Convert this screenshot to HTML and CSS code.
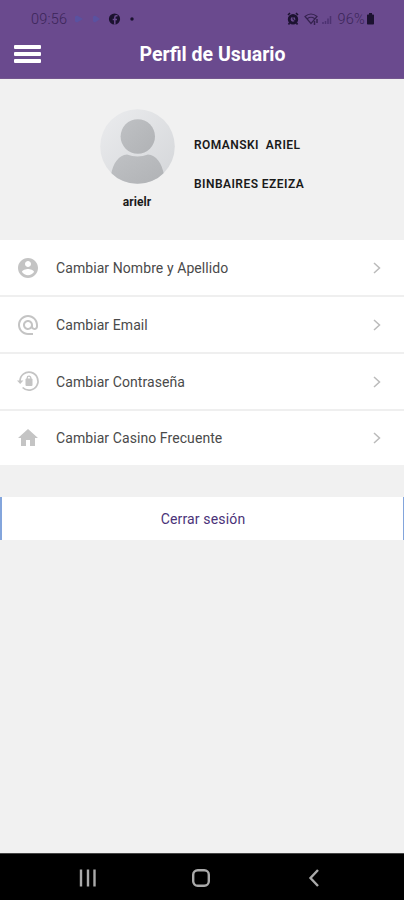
FILE: index.html
```html
<!DOCTYPE html>
<html lang="es">
<head>
  <meta charset="UTF-8" />
  <meta name="viewport" content="width=device-width, initial-scale=1" />
  <title>Perfil de Usuario</title>
  <link rel="stylesheet" href="styles.css">
</head>
<body>
  <header class="header">
    <div class="status-bar">
      <span class="clock">09:56</span>
      <svg class="notifications" width="64" height="14" viewBox="0 0 64 14">
        <path d="M1 4.5l2-1 6 3.500-6 3.500-2-1zM19 4.500l2-1 5 3.500-5 3.500-2-1z" fill="#5a52a0" />
        <circle cx="40.500" cy="7" r="5.600" fill="#1c1230" />
        <path d="M43.500 3.800h-1.200q-1.500 0-1.500 1.600v7M38.700 7.500H43" fill="none" stroke="#6a4a8e" stroke-width="1.500" />
        <circle cx="58" cy="7" r="1.700" fill="#1c1230" />
      </svg>
      <div class="status-right">
        <svg width="48" height="14" viewBox="0 0 48 14">
          <circle cx="6" cy="7.300" r="3.800" fill="none" stroke="#1c1230" stroke-width="2.800" />
          <path d="M1 3l2-2M11 3L9 1M2.500 11l-1 1.500M9.500 11l1 1.500" stroke="#1c1230" stroke-width="1.600" />
          <path d="M6 4.500v3L8 8.500" fill="none" stroke="#1c1230" stroke-width="1" />
          <path d="M18 4.500q6-5 12 0L24 11.500zM20.500 6.500q3.500-2.500 7 0" fill="none" stroke="#35224f" stroke-width="1.200" />
          <path d="M27.500 9v4M30 7v4" stroke="#35224f" stroke-width="1.500" />
          <path d="M36 12v-2M38.500 12V9M41 12V6.500M43.500 12V4" stroke="#4c3270" stroke-width="1.500" />
        </svg>
        <span class="percent">96%</span>
        <svg width="9" height="14" viewBox="0 0 9 14">
          <path d="M3 1h3v1.500h1.200q.8 0 .8.800v8.400q0 .8-.8.800H1.800q-.8 0-.8-.8V3.300q0-.8.8-.8H3z" fill="#1c1230" />
        </svg>
      </div>
    </div>
    <div class="title-bar">
      <div class="menu-btn">
        <span></span>
        <span></span>
        <span></span>
      </div>
      <h1>Perfil de Usuario</h1>
    </div>
  </header>

  <main>
    <section class="profile">
      <div class="profile-user">
        <svg class="avatar" width="76" height="76" viewBox="0 0 76 76">
          <defs>
            <linearGradient id="bg" x1="0" y1="0" x2="1" y2="1">
              <stop offset="0" stop-color="#ebecee" />
              <stop offset="1" stop-color="#d4d6d9" />
            </linearGradient>
            <linearGradient id="person" x1="0" y1="0" x2="1" y2="1">
              <stop offset="0" stop-color="#bfc1c4" />
              <stop offset="1" stop-color="#b0b2b5" />
            </linearGradient>
            <clipPath id="round">
              <circle cx="38.500" cy="37.500" r="37.300" />
            </clipPath>
          </defs>
          <circle cx="38.500" cy="37.500" r="37.300" fill="url(#bg)" />
          <g clip-path="url(#round)" fill="url(#person)">
            <circle cx="38.800" cy="27.500" r="17.200" />
            <path d="M12 66C14 54 20 46 28 45.500q10.500 4 21 0C57 46 63 54 65 66V76H12z" />
          </g>
        </svg>
        <span class="username">arielr</span>
      </div>
      <div class="profile-info">
        <p class="fullname">ROMANSKI&nbsp; ARIEL</p>
        <p class="casino">BINBAIRES EZEIZA</p>
      </div>
    </section>

    <ul class="options">
      <li>
        <svg class="icon" viewBox="0 0 24 24">
          <path fill="#c4c4c4" d="M12 2C6.480 2 2 6.480 2 12s4.480 10 10 10 10-4.480 10-10S17.520 2 12 2zm0 3c1.660 0 3 1.340 3 3s-1.340 3-3 3-3-1.340-3-3 1.340-3 3-3zm0 14.200c-2.500 0-4.710-1.280-6-3.220.03-1.990 4-3.080 6-3.080 1.990 0 5.970 1.090 6 3.080-1.290 1.940-3.500 3.220-6 3.220z" />
        </svg>
        <span class="label">Cambiar Nombre y Apellido</span>
        <svg class="arrow" viewBox="0 0 8 12"><path d="M1 1l5.500 5L1 11" /></svg>
      </li>
      <li>
        <svg class="icon" viewBox="0 0 24 24">
          <path fill="#c4c4c4" d="M12 1.950c-5.520 0-10 4.480-10 10s4.480 10 10 10h5v-2h-5c-4.340 0-8-3.660-8-8s3.660-8 8-8 8 3.660 8 8v1.430c0 .79-.71 1.570-1.500 1.570s-1.500-.78-1.500-1.570v-1.430c0-2.760-2.240-5-5-5s-5 2.240-5 5 2.240 5 5 5c1.380 0 2.640-.56 3.540-1.470.65.89 1.770 1.470 2.960 1.470 1.970 0 3.500-1.600 3.500-3.570v-1.430c0-5.520-4.480-10-10-10zm0 13c-1.660 0-3-1.340-3-3s1.340-3 3-3 3 1.340 3 3-1.340 3-3 3z" />
        </svg>
        <span class="label">Cambiar Email</span>
        <svg class="arrow" viewBox="0 0 8 12"><path d="M1 1l5.500 5L1 11" /></svg>
      </li>
      <li>
        <svg class="icon" viewBox="0 0 24 24">
          <path d="M4 11.500a9 9 0 1 1 2.600 6" fill="none" stroke="#c4c4c4" stroke-width="1.700" />
          <path d="M1 10.500h6.400L4.200 14z" fill="#c4c4c4" />
          <path d="M11.200 9V8a1.800 1.800 0 0 1 3.600 0v1" fill="none" stroke="#c4c4c4" stroke-width="1.300" />
          <rect x="9.500" y="8.500" width="7" height="7.500" rx="1" fill="#c4c4c4" />
        </svg>
        <span class="label">Cambiar Contraseña</span>
        <svg class="arrow" viewBox="0 0 8 12"><path d="M1 1l5.500 5L1 11" /></svg>
      </li>
      <li>
        <svg class="icon" viewBox="0 0 24 24">
          <path fill="#c4c4c4" d="M10 20v-6h4v6h5v-8h3L12 3 2 12h3v8z" />
        </svg>
        <span class="label">Cambiar Casino Frecuente</span>
        <svg class="arrow" viewBox="0 0 8 12"><path d="M1 1l5.500 5L1 11" /></svg>
      </li>
    </ul>

    <button class="logout-btn">Cerrar sesión</button>
  </main>

  <nav class="nav-bar">
    <svg width="18" height="18" viewBox="0 0 18 18">
      <path d="M2 .5v17M9 .5v17M15.500 .5v17" />
    </svg>
    <svg width="18" height="18" viewBox="0 0 18 18">
      <rect x="1.200" y="1.200" width="15.600" height="15.600" rx="4.500" />
    </svg>
    <svg width="18" height="18" viewBox="0 0 18 18">
      <path d="M13 1L5.500 9l7.500 8" />
    </svg>
  </nav>
</body>
</html>
```
FILE: styles.css
```css
* {
  box-sizing: border-box;
}
body {
  font-family: Roboto, sans-serif;
  background: #f1f1f1;
  color: #1a1a1a;
  margin: 0;
  height: 900px;
  display: flex;
  flex-direction: column;
}
.header {
  height: 79px;
  background: #6a4a8e;
  border-bottom: 1px solid #74568f;
}
.status-bar {
  height: 38px;
  padding: 0 29px 0 31px;
  display: flex;
  align-items: center;
  color: #3a2558;
  font-size: 14.500px;
  font-weight: 300;
}
.clock {
  width: 37px;
  white-space: nowrap;
  letter-spacing: 0.200px;
}
.notifications {
  margin-left: 6px;
}
.status-right {
  margin-left: auto;
  display: flex;
  align-items: center;
}
.percent {
  margin: 0 1px 0 3px;
  letter-spacing: 0.200px;
}
.title-bar {
  height: 32px;
  padding: 0 15px 0 14px;
  display: flex;
  align-items: center;
}
.menu-btn {
  width: 27px;
  display: flex;
  flex-direction: column;
  gap: 3px;
}
.menu-btn span {
  height: 4px;
  background: #fff;
  border-radius: 1px;
}
h1 {
  flex: 1;
  margin: 0 5px 0 0;
  color: #fff;
  font-size: 19.500px;
  font-weight: 700;
  text-align: center;
}
main {
  flex: 1;
}
.profile {
  height: 161px;
  padding: 30px 0 0 99px;
  display: flex;
  font-size: 12px;
  font-weight: 600;
}
.profile-user {
  width: 76px;
  display: flex;
  flex-direction: column;
  align-items: center;
}
.username {
  margin-top: 9px;
  line-height: 16px;
  font-weight: 700;
  letter-spacing: 0.100px;
}
.profile-info {
  margin-left: 19px;
  padding-top: 28px;
  letter-spacing: 0.450px;
}
.profile-info p {
  margin: 0 0 23px;
  line-height: 16px;
  white-space: nowrap;
}
.options {
  list-style: none;
  margin: 0;
  padding: 0;
  background: #fff;
}
.options li {
  height: 57px;
  padding: 0 23px 0 16px;
  display: flex;
  align-items: center;
  border-bottom: 2px solid #efefef;
}
.options li:last-child {
  height: 54px;
  border-bottom: none;
}
.icon {
  width: 24px;
  height: 24px;
}
.label {
  flex: 1;
  margin-left: 16px;
  color: #4a4a4a;
  font-size: 14px;
  letter-spacing: 0.080px;
}
.arrow {
  width: 8px;
  height: 12px;
  fill: none;
  stroke: #bbb;
  stroke-width: 1.500;
}
.logout-btn {
  display: block;
  width: 100%;
  height: 43px;
  margin-top: 32px;
  padding: 0 0 0 1px;
  background: #fff;
  border-style: solid;
  border-color: #83a5dc;
  border-width: 0 1px 0 2px;
  color: #4a3278;
  font-family: inherit;
  font-size: 14px;
  letter-spacing: 0.150px;
}
.nav-bar {
  height: 47px;
  padding: 2px 81px 0 79px;
  background: #000;
  border-top: 1px solid #444;
  display: flex;
  align-items: center;
  justify-content: space-between;
}
.nav-bar svg {
  fill: none;
  stroke: #aaa;
  stroke-width: 2.400;
}
```
